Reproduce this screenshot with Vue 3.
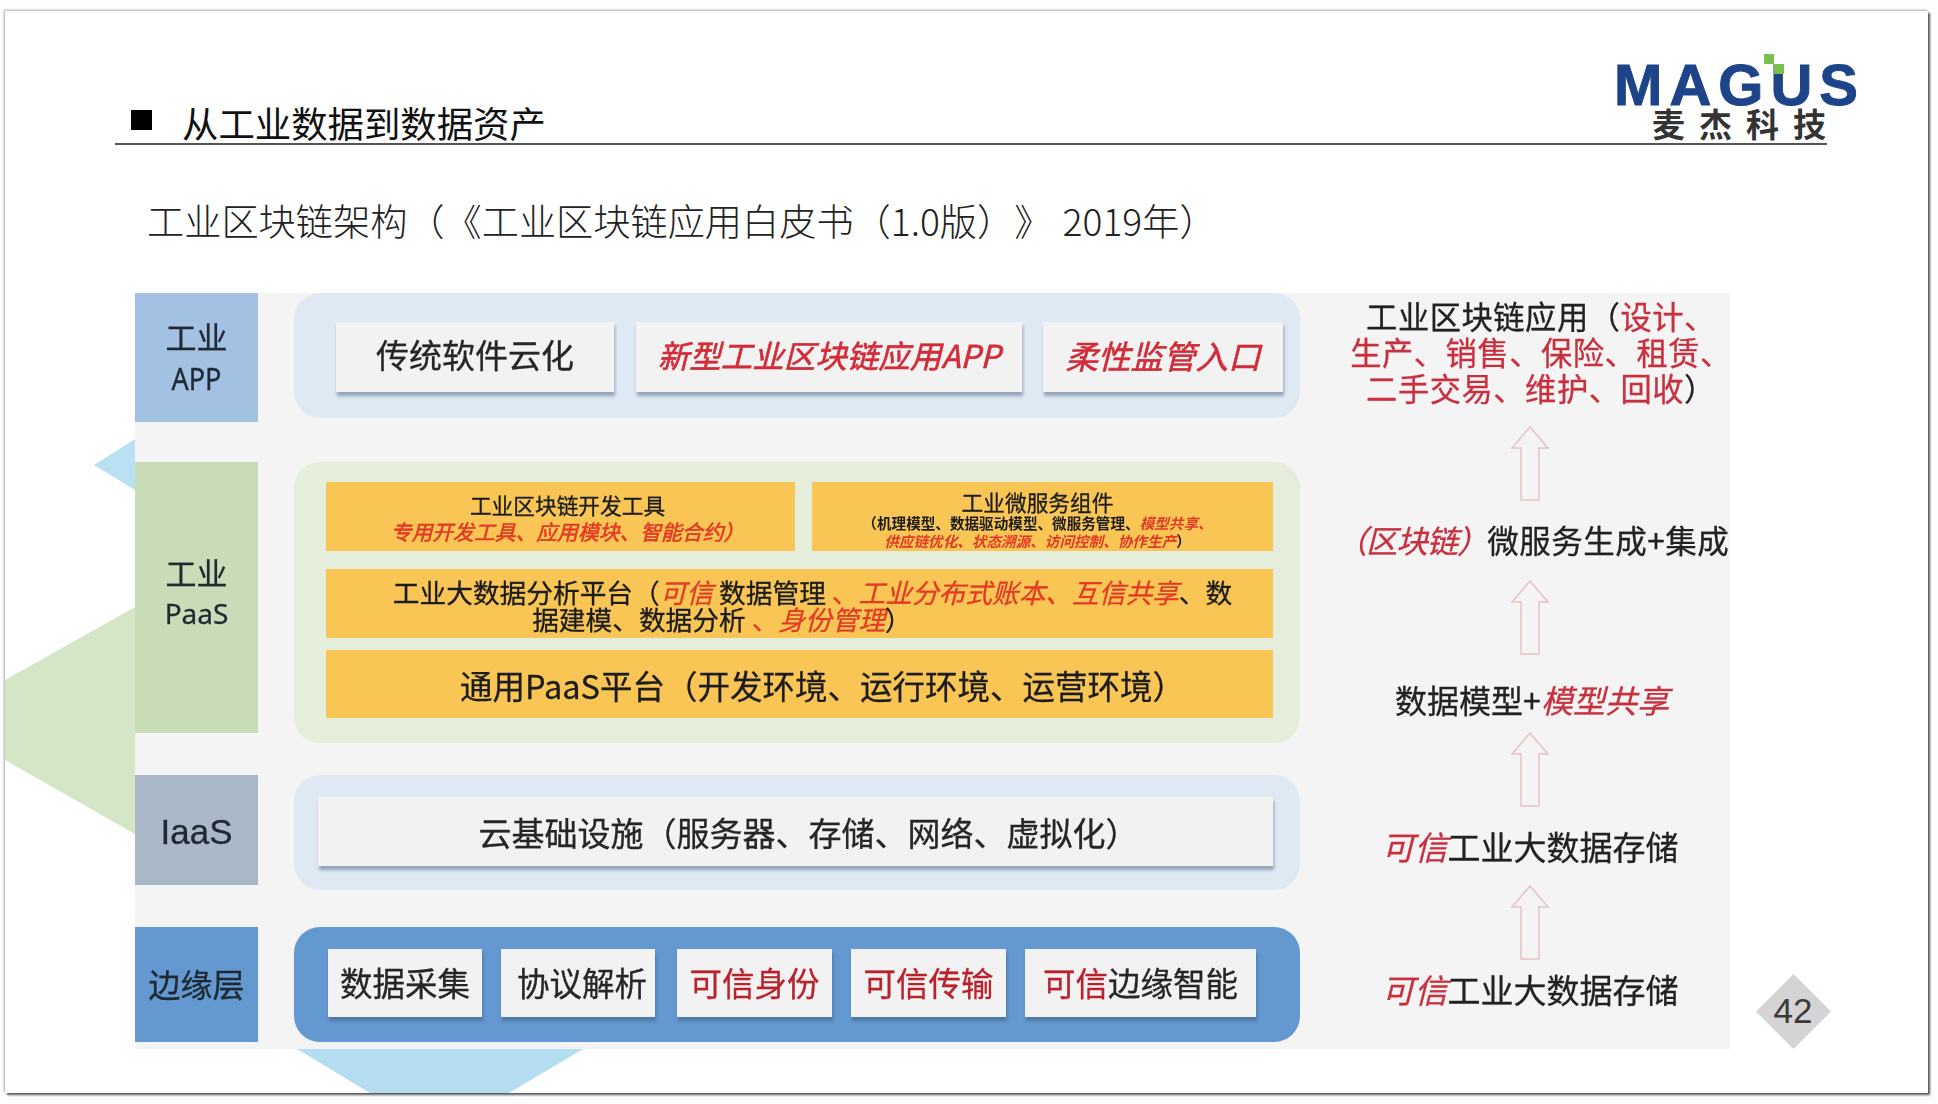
<script setup>
const arrow = '20,1 38,22 29,22 29,74 11,74 11,22 2,22'
const edgeCards = [
  { w: 154, red: '', dark: '数据采集' },
  { w: 154, red: '', dark: '协议解析' },
  { w: 155, red: '可信身份', dark: '' },
  { w: 155, red: '可信传输', dark: '' },
  { w: 231, red: '可信', dark: '边缘智能' }
]
</script>

<template>
  <div class="page">
    <div class="slide">
      <svg class="decor" width="1923" height="1082" viewBox="0 0 1923 1082">
        <polygon points="130,428 89,454 130,479" fill="#b9e0f3" />
        <polygon points="130,596 0,669 0,749 130,823" fill="#d5e6c6" />
        <polygon points="292,1038 578,1038 504,1082 365,1082" fill="#b5ddf2" />
      </svg>

      <header class="head">
        <div class="head-row">
          <div class="title"><i class="bullet"></i><span>从工业数据到数据资产</span></div>
          <div class="logo">
            <div class="logo-word">MAGUS<i class="sq sq1"></i><i class="sq sq2"></i></div>
            <div class="logo-cn">麦杰科技</div>
          </div>
        </div>
      </header>

      <h2 class="subtitle">工业区块链架构（《工业区块链应用白皮书（1.0版）》 2019年）</h2>

      <section class="diagram">
        <div class="layers">
          <div class="layer">
            <div class="label l-app"><span class="cn">工业</span><span class="en">APP</span></div>
            <div class="panel p-app">
              <div class="card c1">传统软件云化</div>
              <div class="card c2 red">新型工业区块链应用APP</div>
              <div class="card c3 red">柔性监管入口</div>
            </div>
          </div>

          <div class="layer">
            <div class="label l-paas"><span class="cn">工业</span><span class="en paas">PaaS</span></div>
            <div class="panel p-paas">
              <div class="y-top">
                <div class="yellow y-a">
                  <div class="y-title">工业区块链开发工具</div>
                  <div class="y-red">专用开发工具、应用模块、智能合约）</div>
                </div>
                <div class="yellow y-b">
                  <div class="y-title">工业微服务组件</div>
                  <div class="y-small">（机理模型、数据驱动模型、微服务管理、<em>模型共享、</em></div>
                  <div class="y-small"><em>供应链优化、状态溯源、访问控制、协作生产</em>）</div>
                </div>
              </div>
              <div class="yellow y-mid">
                <div class="m1">工业大数据分析平台（<em>可信</em> 数据管理 <em class="plain">、</em><em>工业分布式账本、互信共享</em>、数</div>
                <div class="m2">据建模、数据分析 <em class="plain">、</em><em>身份管理</em>）</div>
              </div>
              <div class="yellow y-low">通用PaaS平台（开发环境、运行环境、运营环境）</div>
            </div>
          </div>

          <div class="layer">
            <div class="label l-iaas"><span class="iaas">IaaS</span></div>
            <div class="panel p-iaas">
              <div class="card wide">云基础设施（服务器、存储、网络、虚拟化）</div>
            </div>
          </div>

          <div class="layer">
            <div class="label l-edge"><span class="cn edge">边缘层</span></div>
            <div class="panel p-edge">
              <div v-for="c in edgeCards" :key="c.red + c.dark" class="card e-card" :style="{ width: c.w + 'px' }">
                <span class="e-red">{{ c.red }}</span>{{ c.dark }}
              </div>
            </div>
          </div>
        </div>

        <aside class="flow">
          <div class="f-top">
            <div>工业区块链应用（<em>设计、</em></div>
            <div><em>生产、销售、保险、租赁、</em></div>
            <div><em>二手交易、维护、回收</em>）</div>
          </div>
          <svg class="arrow a1" width="40" height="75" viewBox="0 0 40 75"><polygon :points="arrow" /></svg>
          <div class="f-line f2"><em class="up">（区块链）</em>微服务生成+集成</div>
          <svg class="arrow a2" width="40" height="75" viewBox="0 0 40 75"><polygon :points="arrow" /></svg>
          <div class="f-line f3">数据模型+<em>模型共享</em></div>
          <svg class="arrow a3" width="40" height="75" viewBox="0 0 40 75"><polygon :points="arrow" /></svg>
          <div class="f-line f4"><em>可信</em>工业大数据存储</div>
          <svg class="arrow a4" width="40" height="75" viewBox="0 0 40 75"><polygon :points="arrow" /></svg>
          <div class="f-line f5"><em>可信</em>工业大数据存储</div>
        </aside>
      </section>

      <div class="badge"><i class="diamond"></i><span>42</span></div>
    </div>
  </div>
</template>

<style>
html, body { margin: 0; background: #fdfdfd; }
</style>

<style scoped>
.page {
  width: 1938px;
  height: 1104px;
  padding: 11px 0 0 5px;
  box-sizing: border-box;
  overflow: hidden;
  font-family: "Noto Sans CJK SC", "Noto Sans", sans-serif;
  color: #222;
  text-spacing-trim: space-all;
}
.slide {
  position: relative;
  width: 1923px;
  height: 1082px;
  background: #fff;
  box-shadow: 2px 2px 2px #555, -1px -1px 2px #aaa;
  overflow: hidden;
}
.decor { position: absolute; left: 0; top: 0; }

.head { position: relative; height: 132px; margin: 0 0 0 110px; width: 1712px; border-bottom: 2px solid #555; }
.head-row { display: flex; justify-content: space-between; align-items: flex-end; height: 132px; }
.title { display: flex; align-items: center; font-size: 36.4px; line-height: 44px; color: #111; margin-left: 16px; margin-bottom: -1px; }
.bullet { width: 21px; height: 20px; background: #000; margin-right: 30px; margin-top: -4px; }
.logo { margin-right: -35px; width: 245px; display: flex; flex-direction: column; align-items: center; margin-bottom: 2px; }
.logo-word {
  position: relative;
  font-family: "Liberation Sans", sans-serif;
  font-weight: 700;
  font-size: 58px;
  line-height: 50px;
  letter-spacing: 7px;
  color: #1d4489;
  white-space: nowrap;
  -webkit-text-stroke: 1px #1d4489;
  margin: -2px 0 -5px;
}
.sq { position: absolute; width: 10px; height: 10px; background: #7cc04c; }
.sq1 { left: 150px; top: -6px; }
.sq2 { left: 160px; top: 4px; }
.logo-cn { font-size: 33px; line-height: 36px; font-weight: 700; letter-spacing: 14px; color: #333; margin-left: 70px; white-space: nowrap; width: 245px; }

.subtitle { margin: 51px 0 0 142px; font-size: 37.2px; line-height: 48px; font-weight: 300; color: #222; white-space: nowrap; word-spacing: 3px; height: 48px; }

.diagram { position: relative; display: flex; width: 1595px; margin: 49px 0 0 130px; background: #f4f4f4; height: 756px; filter: blur(.4px); -webkit-text-stroke: .3px currentColor; }
.layers { width: 1165px; display: flex; flex-direction: column; }
.layer { display: flex; align-items: flex-start; gap: 36px; }
.layer:nth-child(1) { height: 169px; }
.layer:nth-child(2) { height: 313px; }
.layer:nth-child(3) { height: 152px; }

.label { width: 123px; display: flex; flex-direction: column; align-items: center; justify-content: center; flex: none; box-sizing: border-box; }
.cn { font-size: 31px; line-height: 40px; color: #1f2a33; }
.en { font-size: 27px; line-height: 32px; font-family: "Noto Sans", sans-serif; color: #1f2a33; display: inline-block; transform: scaleY(1.15); }
.paas { font-size: 28px; transform: none; }
.iaas { font-size: 35px; line-height: 48px; font-family: "Liberation Sans", sans-serif; color: #1f2a33; padding-top: 4px; }
.edge { font-size: 32px; padding-bottom: 3px; }
.l-app { height: 129px; background: #a3c1e3; gap: 6px; padding-bottom: 5px; }
.l-paas { height: 271px; background: #c8ddb7; gap: 5px; padding-bottom: 14px; }
.l-iaas { height: 110px; background: #abb8ca; }
.l-edge { height: 115px; background: #6398d0; }

.panel { width: 1006px; box-sizing: border-box; border-radius: 26px; flex: none; }
.p-app { height: 125px; background: #dfe9f4; display: flex; padding: 29px 0 0 42px; gap: 22px; align-items: flex-start; }
.p-paas { height: 281px; background: #e5eeda; padding: 20px 27px 0 32px; display: flex; flex-direction: column; gap: 14px; }
.p-iaas { height: 115px; background: #dfe9f4; padding: 22px 27px 0 24px; }
.p-edge { height: 115px; background: #6398d0; padding: 22px 0 0 34px; display: flex; gap: 19px; align-items: flex-start; }

.card {
  height: 70px;
  display: flex;
  align-items: center;
  justify-content: center;
  box-sizing: border-box;
  background: #f2f2f2;
  box-shadow: 1px 4px 3px rgba(60, 80, 110, .45);
  font-size: 33px;
  color: #262626;
  white-space: nowrap;
  flex: none;
}
.c1 { width: 278px; padding-bottom: 6px; }
.c2 { width: 386px; padding-bottom: 6px; font-size: 31.5px; -webkit-text-stroke: .6px currentColor; }
.c3 { width: 240px; margin-left: -1px; padding-bottom: 6px; font-size: 32.5px; -webkit-text-stroke: .6px currentColor; }
.red { color: #d22c38; font-style: italic; }
.wide { height: 69px; padding-left: 26px; }
.e-card { height: 68px; font-size: 32.5px; padding-bottom: 3px; }
.e-card:nth-child(2) { padding-left: 8px; }
.e-card:nth-child(3) { margin-left: 3px; }
.e-red { color: #b9232d; }

.yellow { background: #f9c655; color: #1c1c1c; text-align: center; box-sizing: border-box; }
.y-top { display: flex; gap: 17px; }
.y-a { width: 469px; height: 69px; padding: 11px 0 0 14px; }
.y-b { width: 461px; height: 69px; padding: 8px 10px 0 0; }
.y-title { font-size: 21.7px; line-height: 24px; }
.y-red { font-size: 20.8px; line-height: 28px; font-style: italic; color: #e33b26; white-space: nowrap; -webkit-text-stroke: .6px currentColor; }
.y-small { font-size: 14.6px; line-height: 18px; font-weight: 700; white-space: nowrap; -webkit-text-stroke: 0; }
.y-small em { color: #e23a26; }
.y-mid { height: 69px; padding-top: 9px; font-size: 26.7px; line-height: 27px; white-space: nowrap; margin-top: 4px; }
.m1 { padding-left: 26px; }
.m2 { padding-right: 155px; }
.y-mid em { color: #e33b26; }
.y-mid em.plain { font-style: normal; }
.y-low { height: 68px; margin-top: -2px; padding: 0 0 0 46px; display: flex; align-items: center; justify-content: center; font-size: 32.5px; white-space: nowrap; }

em { font-style: italic; }

.flow { width: 400px; padding-left: 30px; display: flex; flex-direction: column; align-items: center; }
.flow em { color: #c8303f; }
.f-top { margin-top: 5px; margin-left: 22px; font-size: 31.3px; letter-spacing: .5px; line-height: 36px; color: #222; text-align: center; white-space: nowrap; }
.f-top em { font-style: normal; }
.f-line { height: 40px; line-height: 40px; white-space: nowrap; color: #222; }
.f2 { font-size: 31.5px; margin-left: 5px; margin-top: 18px; letter-spacing: .5px; }
.f2 .up { font-style: italic; letter-spacing: -1.2px; }
.f3 { font-size: 32px; margin-left: 4px; margin-top: 24px; }
.f4 { font-size: 33px; margin-top: 19px; }
.f5 { font-size: 33px; margin-top: 9px; }
.arrow { flex: none; display: block; }
.arrow polygon { fill: #f4f4f4; stroke: #e8c2c2; stroke-width: 1.5; }
.a1 { margin-top: 20px; }
.a2 { margin-top: 21px; }
.a3 { margin-top: 13px; }
.a4 { margin-top: 19px; }

.badge {
  position: absolute;
  left: 1751px;
  top: 963px;
  width: 74px;
  height: 74px;
  display: flex;
  align-items: center;
  justify-content: center;
}
.diamond { position: absolute; width: 53px; height: 53px; background: #d4d4d4; transform: rotate(45deg); }
.badge span { position: relative; font-family: "Liberation Sans", sans-serif; font-size: 35px; color: #3a3a3a; }
</style>
